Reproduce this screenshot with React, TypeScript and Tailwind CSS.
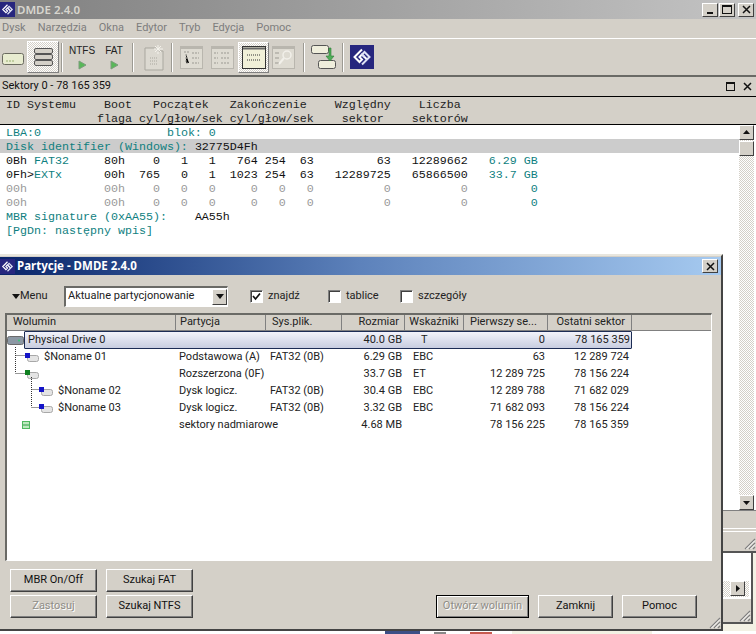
type Seg = [string, string?];

const TEAL = "text-[#0f7f7f]";
const DIM = "text-[#9a9a9a]";
const INK = "text-[#111]";

const zeroRow: Seg[] = [
  ["00h           00h    0   0   0     0   0   0          0          0", DIM],
  ["         0", TEAL],
];

const sectorLines: { segs: Seg[]; shaded?: boolean }[] = [
  { segs: [["LBA:0", TEAL], ["                  blok: 0", TEAL]] },
  { segs: [["Disk identifier (Windows): ", TEAL], ["32775D4Fh", INK]], shaded: true },
  {
    segs: [
      ["0Bh ", INK],
      ["FAT32", TEAL],
      ["     80h    0   1   1   764 254  63         63   12289662   ", INK],
      ["6.29 GB", TEAL],
    ],
  },
  {
    segs: [
      ["0Fh>", INK],
      ["EXTx", TEAL],
      ["      00h  765   0   1  1023 254  63   12289725   65866500   ", INK],
      ["33.7 GB", TEAL],
    ],
  },
  { segs: zeroRow },
  { segs: zeroRow },
  { segs: [["MBR signature (0xAA55):    ", TEAL], ["AA55h", INK]] },
  { segs: [["[PgDn: następny wpis]", TEAL]] },
];

const columns = [
  { label: "Wolumin", w: "w-[169px]", pad: "pl-1.5" },
  { label: "Partycja", w: "w-[90px]", pad: "pl-1" },
  { label: "Sys.plik.", w: "w-[76px]", pad: "pl-1.5" },
  { label: "Rozmiar", w: "w-[63px]", pad: "justify-end pr-[5px]" },
  { label: "Wskaźniki", w: "w-[59px]", pad: "justify-center" },
  { label: "Pierwszy se...", w: "w-[84px]", pad: "pl-1.5" },
  { label: "Ostatni sektor", w: "w-[84px]", pad: "justify-end pr-1.5" },
];

const rows = [
  { name: "$Noname 01", indent: "pl-[18px]", chip: "blue", part: "Podstawowa (A)", fs: "FAT32 (0B)", size: "6.29 GB", flags: "EBC", first: "63", last: "12 289 724" },
  { name: "", indent: "pl-[18px]", chip: "green", part: "Rozszerzona  (0F)", fs: "", size: "33.7 GB", flags: "ET", first: "12 289 725", last: "78 156 224" },
  { name: "$Noname 02", indent: "pl-[32px]", chip: "blue", part: "Dysk logicz.", fs: "FAT32 (0B)", size: "30.4 GB", flags: "EBC", first: "12 289 788", last: "71 682 029" },
  { name: "$Noname 03", indent: "pl-[32px]", chip: "blue", part: "Dysk logicz.", fs: "FAT32 (0B)", size: "3.32 GB", flags: "EBC", first: "71 682 093", last: "78 156 224" },
  { name: "", indent: "pl-[15px]", chip: "none", part: "sektory nadmiarowe", fs: "", size: "4.68 MB", flags: "", first: "78 156 225", last: "78 165 359" },
];

function Logo({ size }: { size: number }) {
  return (
    <svg width={size} height={size} viewBox="0 0 24 24" className="shrink-0">
      <rect width="24" height="24" fill="#26267e" />
      <path d="M12 4.5 4.5 12l5 5 2.5-2.5L9.5 12 12 9.5l5 5" fill="none" stroke="#fff" strokeWidth="2" />
      <path d="M12 19.5 19.5 12l-5-5L12 9.5l2.5 2.5" fill="none" stroke="#dfe3f5" strokeWidth="2" />
    </svg>
  );
}

function Grip() {
  return (
    <svg width="13" height="13" viewBox="0 0 13 13" className="shrink-0">
      <path d="M12 2 2 12M12 6 6 12M12 10 10 12" stroke="#808080" strokeWidth="1.2" />
      <path d="M12 3.5 3.5 12M12 7.5 7.5 12" stroke="#fff" strokeWidth="1" />
    </svg>
  );
}

function CaptionButton({ children }: { children: React.ReactNode }) {
  return (
    <div className="flex h-[14px] w-[16px] items-center justify-center border border-t-white border-l-white border-r-[#404040] border-b-[#404040] bg-[#d4d0c8]">
      {children}
    </div>
  );
}

function CloseGlyph({ size = 9 }: { size?: number }) {
  return (
    <svg width={size} height={size} viewBox="0 0 9 9">
      <path d="M1 1l7 7M8 1 1 8" stroke="#111" strokeWidth="1.5" />
    </svg>
  );
}

function ScrollButton({ dir }: { dir: "up" | "down" | "right" }) {
  const d = dir === "up" ? "M1 6h7L4.5 2z" : dir === "down" ? "M1 3h7L4.5 7z" : "M3 1v7l4-3.5z";
  return (
    <div className="flex h-[15px] w-[15px] shrink-0 items-center justify-center border border-t-white border-l-white border-r-[#404040] border-b-[#404040] bg-[#d4d0c8]">
      <svg width="9" height="9" viewBox="0 0 9 9">
        <path d={d} fill="#111" />
      </svg>
    </div>
  );
}

function Sep() {
  return <div className="h-[29px] w-[2px] shrink-0 border-r border-r-white bg-[#9c9a93]" />;
}

function Play({ className }: { className?: string }) {
  return (
    <svg width="9" height="10" viewBox="0 0 9 10" className={className}>
      <path d="M1 1v8l7-4z" fill="#58b858" stroke="#7c9c7c" />
    </svg>
  );
}

function DisabledTile({ kind }: { kind: "tree" | "list" | "search" }) {
  return (
    <svg width="23" height="23" viewBox="0 0 23 23" className="shrink-0">
      <rect width="23" height="23" fill="#b9b6ae" />
      <rect x="1" y="3" width="21" height="19" fill="#dedbd2" />
      {kind === "tree" && (
        <path d="M4 6h5M6 8v9h3M6 12h3M12 7h7M12 12h7M12 17h7" stroke="#9b9992" strokeDasharray="2 1" />
      )}
      {kind === "list" && (
        <path d="M3 7h4M3 12h4M3 17h4M10 7h9M10 12h9M10 17h9" stroke="#9b9992" strokeDasharray="2 1" />
      )}
      {kind === "search" && (
        <>
          <path d="M3 7h4M3 12h4M3 17h4" stroke="#9b9992" />
          <circle cx="15" cy="9" r="4" fill="none" stroke="#f2f0ea" strokeWidth="1.5" />
          <path d="M12 12l-5 6" stroke="#f2f0ea" strokeWidth="2" />
        </>
      )}
    </svg>
  );
}

function Toolbar() {
  return (
    <div className="flex h-[36px] items-center bg-[#d4d0c8] pl-[2px]">
      <svg width="22" height="12" viewBox="0 0 22 12" className="mt-[4px] shrink-0">
        <rect x="0.5" y="0.5" width="21" height="11" rx="2" fill="#e8ecd0" stroke="#6b6b60" />
        <path d="M4 8h8" stroke="#98b070" strokeDasharray="2 1" />
      </svg>
      <div className="ml-[3px] flex h-[32px] w-[32px] items-center justify-center border border-t-white border-l-white border-r-[#808080] border-b-[#808080] bg-[repeating-conic-gradient(#fff_0_25%,#d4d0c8_0_50%)] bg-[length:2px_2px]">
        <svg width="19" height="18" viewBox="0 0 19 18">
          <rect x="0.5" y="0.5" width="18" height="5" rx="1.5" fill="#d4d0c8" stroke="#555" />
          <rect x="0.5" y="6.5" width="18" height="5" rx="1.5" fill="#d4d0c8" stroke="#555" />
          <rect x="0.5" y="12.5" width="18" height="5" rx="1.5" fill="#d4d0c8" stroke="#555" />
        </svg>
      </div>
      <div className="ml-[2px]">
        <Sep />
      </div>
      <div className="ml-[7px] flex w-[24px] flex-col items-center font-['Liberation_Sans',sans-serif] text-[10px] leading-[12px] text-[#222]">
        <span>NTFS</span>
        <Play className="mt-[3px]" />
      </div>
      <div className="ml-[10px] flex w-[20px] flex-col items-center font-['Liberation_Sans',sans-serif] text-[10px] leading-[12px] text-[#222]">
        <span>FAT</span>
        <Play className="mt-[3px]" />
      </div>
      <div className="ml-[8px]">
        <Sep />
      </div>
      <svg width="21" height="27" viewBox="0 0 21 27" className="ml-[10px] shrink-0">
        <path d="M1 4h12v3h6v19H1z" fill="#dcd9d1" stroke="#a9a79f" />
        <path d="M14 1v9M10 5h9M11 2l6 6M17 2l-6 6" stroke="#f4f2ec" />
        <path d="M6 14h8M6 17h8M6 20h8" stroke="#a9a79f" strokeDasharray="1 1" />
      </svg>
      <div className="ml-[6px]">
        <Sep />
      </div>
      <div className="ml-[7px]">
        <DisabledTile kind="tree" />
      </div>
      <div className="ml-[8px]">
        <DisabledTile kind="list" />
      </div>
      <div className="ml-[4px] flex h-[31px] w-[31px] items-center justify-center border border-t-white border-l-white border-r-[#808080] border-b-[#808080] bg-[repeating-conic-gradient(#fff_0_25%,#d4d0c8_0_50%)] bg-[length:2px_2px]">
        <svg width="24" height="23" viewBox="0 0 24 23">
          <rect x="0.5" y="0.5" width="23" height="22" fill="#f1f0d8" stroke="#333" />
          <path d="M1 2.5h22" stroke="#666" strokeWidth="2" />
          <path d="M5 9h14M5 14h14" stroke="#333" strokeDasharray="1 1" />
        </svg>
      </div>
      <div className="ml-[3px]">
        <DisabledTile kind="search" />
      </div>
      <div className="ml-[8px]">
        <Sep />
      </div>
      <svg width="25" height="25" viewBox="0 0 25 25" className="ml-[6px] shrink-0">
        <rect x="0.5" y="0.5" width="17" height="8" rx="2" fill="#efeedc" stroke="#555" />
        <rect x="7.5" y="15.5" width="17" height="8" rx="2" fill="#efeedc" stroke="#555" />
        <path d="M18 3h2v8h3l-4 5-4-5h3z" fill="#4fae58" stroke="#2d7a37" strokeWidth="0.6" />
      </svg>
      <div className="ml-[6px]">
        <Sep />
      </div>
      <div className="ml-[6px]">
        <Logo size={24} />
      </div>
    </div>
  );
}

function SectorTable() {
  return (
    <div className="flex h-[385px] bg-white">
      <div className="min-w-0 flex-1 font-['Liberation_Mono',monospace] text-[11.67px] leading-[17px]">
        {sectorLines.map((line, i) => (
          <div key={i} className={`h-[14px] whitespace-pre pl-[6px] ${line.shaded ? "bg-[#cccccc]" : ""}`}>
            {line.segs.map(([text, color], j) => (
              <span key={j} className={color}>
                {text}
              </span>
            ))}
          </div>
        ))}
      </div>
      <div className="mr-[2px] flex w-[15px] shrink-0 flex-col bg-[repeating-conic-gradient(#fff_0_25%,#d4d0c8_0_50%)] bg-[length:2px_2px]">
        <ScrollButton dir="up" />
        <div className="mt-[1px] h-[15px] border border-t-white border-l-white border-r-[#404040] border-b-[#404040] bg-[#d4d0c8]" />
        <div className="flex-1" />
        <ScrollButton dir="down" />
      </div>
    </div>
  );
}

function MainWindow() {
  return (
    <div className="flex h-[553px] flex-col border-b-2 border-b-[#555] bg-[#d4d0c8]">
      <div className="flex h-[19px] items-center bg-gradient-to-r from-[#808080] to-[#c4c4c4] pr-[2px]">
        <Logo size={15} />
        <span className="ml-[2px] flex-1 font-['Noto_Sans',sans-serif] text-[11.5px] font-semibold text-[#d8d6cf]">DMDE 2.4.0</span>
        <div className="flex gap-[1px]">
          <CaptionButton>
            <div className="mt-[6px] h-[2px] w-[6px] bg-[#111]" />
          </CaptionButton>
          <CaptionButton>
            <div className="h-[9px] w-[10px] border border-t-2 border-[#111]" />
          </CaptionButton>
          <div className="ml-[2px]">
            <CaptionButton>
              <CloseGlyph />
            </CaptionButton>
          </div>
        </div>
      </div>
      <div className="flex h-[20px] items-center gap-[12px] border-b border-b-white pl-[2px] text-[11px] text-[#7d7d7d]">
        {["Dysk", "Narzędzia", "Okna", "Edytor", "Tryb", "Edycja", "Pomoc"].map((m) => (
          <span key={m}>{m}</span>
        ))}
      </div>
      <Toolbar />
      <div className="flex h-[22px] items-center border-t-2 border-t-[#6a6a66] border-b border-b-black pl-[2px] pr-[4px] text-[11px] text-[#111]">
        <span className="flex-1">Sektory 0 - 78 165 359</span>
        <div className="mr-[8px] h-[9px] w-[9px] border border-t-2 border-[#111]" />
        <CloseGlyph />
      </div>
      <div className="h-[28px] whitespace-pre border-b border-b-black pl-[6px] pt-[1px] font-['Liberation_Mono',monospace] text-[11.67px] leading-[14px] text-[#222]">
        <div>{"ID Systemu    Boot   Początek   Zakończenie    Względny    Liczba"}</div>
        <div>{"             flaga cyl/głow/sek cyl/głow/sek    sektor    sektorów"}</div>
      </div>
      <SectorTable />
      <div className="mx-0 h-[19px] border border-r-0 border-t-[#808080] border-b-white bg-[#d4d0c8]" />
      <div className="mt-[2px] flex flex-1 items-end justify-end border-t border-t-white pb-[1px]">
        <Grip />
      </div>
    </div>
  );
}

function BackWindow() {
  return (
    <div className="mr-[3px] flex h-[71px] flex-col border-r-2 border-b-2 border-r-[#555] border-b-[#555] bg-[#d4d0c8]">
      <div className="flex h-[45px] flex-col justify-end bg-white pb-[1px] pr-[2px]">
        <div className="flex h-[16px] justify-end bg-[repeating-conic-gradient(#fff_0_25%,#d4d0c8_0_50%)] bg-[length:2px_2px] pr-[4px]">
          <ScrollButton dir="right" />
        </div>
      </div>
      <div className="flex flex-1 items-end justify-end border-t border-t-white">
        <Grip />
      </div>
    </div>
  );
}

function PushButton({
  children,
  disabled,
  focused,
  className,
}: {
  children: React.ReactNode;
  disabled?: boolean;
  focused?: boolean;
  className: string;
}) {
  return (
    <button
      className={`flex h-[23px] items-center justify-center border text-[11px] ${className} ${
        focused
          ? "border-black shadow-[inset_1px_1px_0_#fff,inset_-1px_-1px_0_#808080]"
          : "border-t-white border-l-white border-r-[#404040] border-b-[#404040] shadow-[inset_-1px_-1px_0_#808080]"
      } ${disabled ? "text-[#8f8d87] [text-shadow:1px_1px_0_#fff]" : "text-[#111]"}`}
    >
      {children}
    </button>
  );
}

function CheckItem({ label, checked, className }: { label: string; checked?: boolean; className: string }) {
  return (
    <div className={`flex items-center gap-[5px] ${className}`}>
      <div className="flex h-[13px] w-[13px] items-center justify-center border border-t-[#808080] border-l-[#808080] border-r-white border-b-white bg-white shadow-[inset_1px_1px_0_#404040]">
        {checked && (
          <svg width="9" height="9" viewBox="0 0 9 9">
            <path d="M1 4l2.5 3L8 1.5" fill="none" stroke="#111" strokeWidth="1.7" />
          </svg>
        )}
      </div>
      <span>{label}</span>
    </div>
  );
}

function DriveChip({ color }: { color: string }) {
  if (color === "none") {
    return (
      <svg width="8" height="8" viewBox="0 0 8 8" className="shrink-0">
        <rect x="0.5" y="0.5" width="7" height="7" fill="#bfe8bf" stroke="#50b860" />
        <path d="M1 4h6" stroke="#2fa048" />
      </svg>
    );
  }
  return (
    <svg width="14" height="9" viewBox="0 0 14 9" className="shrink-0">
      <rect x="2.5" y="2.5" width="11" height="6" rx="2" fill="#e4e4e4" stroke="#a8a8a8" />
      <rect x="0" y="0" width="5" height="5" fill={color === "blue" ? "#1414c8" : "#0f7f20"} />
    </svg>
  );
}

function PartitionList() {
  return (
    <div className="relative ml-[5px] mr-[9px] h-[248px] overflow-hidden border border-t-2 border-l-2 border-t-[#6a6a66] border-l-[#6a6a66] border-r-white border-b-white bg-white text-[11px] text-[#222]">
      <div className="flex h-[16px] border-b border-b-[#808080] bg-[#d4d0c8]">
        {columns.map((c) => (
          <div key={c.label} className={`flex h-full shrink-0 items-center whitespace-nowrap border-r border-r-[#808080] ${c.w} ${c.pad}`}>
            {c.label}
          </div>
        ))}
      </div>
      <div className="flex h-[17px] w-[625px] items-start">
        <svg width="17" height="9" viewBox="0 0 17 9" className="mt-[5px] shrink-0">
          <rect x="0.5" y="0.5" width="16" height="8" rx="2" fill="#8c98a4" stroke="#6b6b6b" />
          <circle cx="12" cy="4.5" r="1" fill="#3c7" />
        </svg>
        <div className="flex h-[18px] w-[608px] shrink-0 items-center rounded-[1px] border border-[#1c2c54] bg-gradient-to-b from-[#f2f3fa] to-[#c8cde0] pt-[1px]">
          <span className="w-[151px] shrink-0 pl-[3px]">Physical Drive 0</span>
          <span className="w-[90px] shrink-0" />
          <span className="w-[76px] shrink-0" />
          <span className="w-[63px] shrink-0 pr-[3px] text-right">40.0 GB</span>
          <span className="w-[59px] shrink-0 pl-[16px]">T</span>
          <span className="w-[84px] shrink-0 pr-[3px] text-right">0</span>
          <span className="flex-1 pr-[1px] text-right">78 165 359</span>
        </div>
      </div>
      {rows.map((r, i) => (
        <div key={i} className="flex h-[17px] items-center pt-[1px]">
          <div className={`flex w-[169px] shrink-0 items-center gap-[5px] ${r.indent}`}>
            <DriveChip color={r.chip} />
            {r.name && <span>{r.name}</span>}
          </div>
          <span className="w-[90px] shrink-0 whitespace-nowrap pl-[3px]">{r.part}</span>
          <span className="w-[76px] shrink-0 pl-[4px]">{r.fs}</span>
          <span className="w-[63px] shrink-0 pr-[3px] text-right">{r.size}</span>
          <span className="w-[59px] shrink-0 pl-[8px]">{r.flags}</span>
          <span className="w-[84px] shrink-0 pr-[3px] text-right">{r.first}</span>
          <span className="w-[84px] shrink-0 pr-[3px] text-right">{r.last}</span>
        </div>
      ))}
      {/* tree connectors */}
      <svg width="40" height="100" viewBox="0 0 40 100" className="absolute left-0 top-0">
        <path d="M8.5 32v26M8.5 40.5h9M8.5 58.5h9M24.5 62v30M24.5 74.5h8M24.5 92.5h8" fill="none" stroke="#333" strokeDasharray="1 1" />
      </svg>
    </div>
  );
}

function PartitionDialog() {
  return (
    <div className="absolute left-0 top-[254px] flex h-[377px] w-[723px] flex-col border-t-2 border-r-2 border-b-2 border-t-[#e8e6de] border-r-[#444] border-b-[#444] bg-[#d4d0c8]">
      <div className="mt-[1px] flex h-[18px] items-center bg-gradient-to-r from-[#0a246a] via-[#5d82bb] to-[#a6caf0] pr-[3px]">
        <Logo size={15} />
        <span className="ml-[2px] flex-1 font-['Noto_Sans',sans-serif] text-[11.5px] font-bold text-white">Partycje - DMDE 2.4.0</span>
        <CaptionButton>
          <CloseGlyph />
        </CaptionButton>
      </div>
      <div className="flex h-[38px] items-center pt-[4px] text-[11px] text-[#222]">
        <div className="flex w-[64px] items-center pl-[12px]">
          <svg width="8" height="5" viewBox="0 0 8 5" className="shrink-0">
            <path d="M0 0h8L4 5z" fill="#111" />
          </svg>
          <span>Menu</span>
        </div>
        <div className="flex h-[21px] w-[164px] items-center border border-t-2 border-l-2 border-t-[#6a6a66] border-l-[#6a6a66] border-r-white border-b-white bg-white pl-[2px]">
          <span className="flex-1 whitespace-nowrap">Aktualne partycjonowanie</span>
          <div className="flex h-[16px] w-[15px] items-center justify-center border border-t-white border-l-white border-r-[#404040] border-b-[#404040] bg-[#d4d0c8]">
            <svg width="8" height="5" viewBox="0 0 8 5">
              <path d="M0 0h8L4 5z" fill="#111" />
            </svg>
          </div>
        </div>
        <CheckItem label="znajdź" checked className="ml-[22px] w-[78px]" />
        <CheckItem label="tablice" className="w-[72px]" />
        <CheckItem label="szczegóły" className="" />
      </div>
      <PartitionList />
      <div className="relative flex flex-1 items-end justify-between pb-[11px] pl-[10px] pr-[24px]">
        <div className="grid grid-cols-[87px_87px] gap-x-[9px] gap-y-[3px]">
          <PushButton className="w-[87px]">MBR On/Off</PushButton>
          <PushButton className="w-[87px]">Szukaj FAT</PushButton>
          <PushButton className="w-[87px]" disabled>
            Zastosuj
          </PushButton>
          <PushButton className="w-[87px]">Szukaj NTFS</PushButton>
        </div>
        <div className="flex gap-[9px]">
          <PushButton className="w-[93px]" disabled focused>
            Otwórz wolumin
          </PushButton>
          <PushButton className="w-[75px]">Zamknij</PushButton>
          <PushButton className="w-[75px]">Pomoc</PushButton>
        </div>
        <div className="absolute bottom-0 right-0">
          <Grip />
        </div>
      </div>
    </div>
  );
}

export default function App() {
  return (
    <div className="relative flex h-[634px] w-[756px] flex-col overflow-hidden bg-[#f3f1e4] font-['Roboto',sans-serif]">
      <MainWindow />
      <BackWindow />
      <div className="mt-auto flex h-[3px] items-end bg-white pl-[385px]">
        <div className="h-[3px] w-[35px] bg-[#3c4f86]" />
        <div className="ml-[14px] h-[2px] w-[12px] bg-[#888]" />
        <div className="ml-[24px] h-[2px] w-[22px] bg-[#c85a50]" />
        <div className="ml-[20px] h-[3px] w-[140px] bg-[#f3f1e4]" />
      </div>
      <PartitionDialog />
    </div>
  );
}
